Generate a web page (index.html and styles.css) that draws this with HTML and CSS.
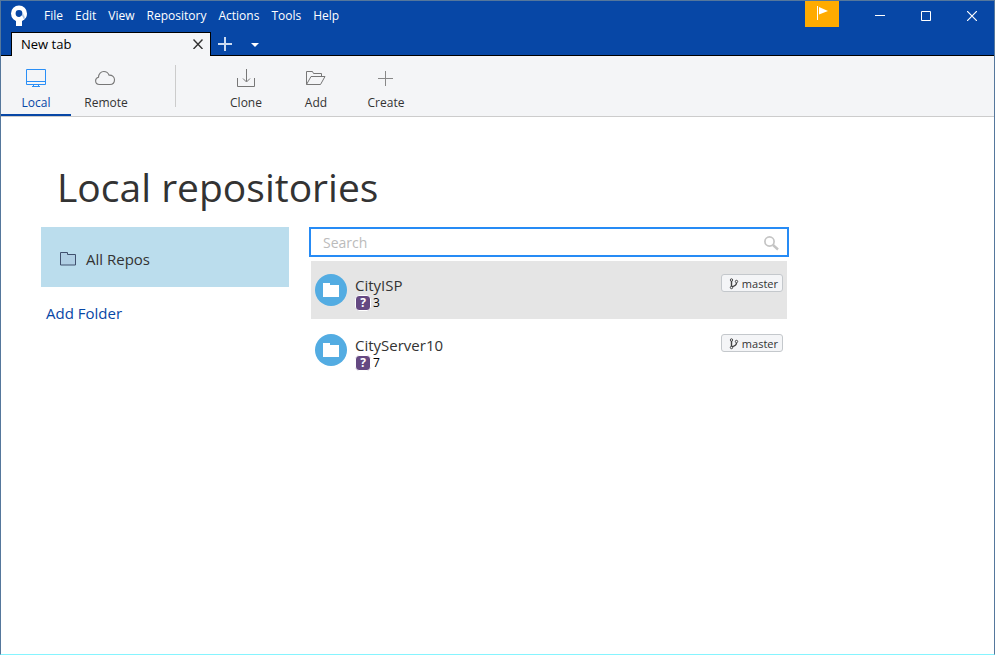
FILE: index.html
```html
<!DOCTYPE html>
<html lang="en">
<head>
<meta charset="utf-8">
<title>New tab</title>
<link rel="stylesheet" href="styles.css">
</head>
<body>
<div class="window">
  <header class="titlebar">
    <svg class="logo" width="18" height="22" viewBox="0 0 18 22">
      <defs><linearGradient id="shade" x1="0.4" y1="0.8" x2="1" y2="0.4"><stop offset="0" stop-color="#fff"/><stop offset="0.4" stop-color="#9db8dd"/><stop offset="1" stop-color="#fff"/></linearGradient></defs>
      <circle cx="9" cy="8.500" r="5.700" fill="none" stroke="#fff" stroke-width="4.600"/>
      <path d="M11 13.500Q14.700 12 14.700 8.500" fill="none" stroke="url(#shade)" stroke-width="4"/>
      <path d="M6 13h6v8H6z" fill="#fff"/>
    </svg>
    <nav class="menu">
      <button>File</button><button>Edit</button><button>View</button><button>Repository</button><button>Actions</button><button>Tools</button><button>Help</button>
    </nav>
    <button class="flag" aria-label="Notifications">
      <svg width="12" height="16" viewBox="0 0 12 16"><path d="M1 1h1v14H1zM3 2l9 4-9 3.500z" fill="#fff"/></svg>
    </button>
    <div class="controls">
      <button aria-label="Minimize"><svg width="10" height="10"><path d="M0 4.500h10" stroke="#fff"/></svg></button>
      <button aria-label="Maximize"><svg width="10" height="10"><path d="M.5.5h9v9h-9z" fill="none" stroke="#fff"/></svg></button>
      <button aria-label="Close"><svg width="10" height="10"><path d="M0 0l10 10M10 0L0 10" stroke="#fff" stroke-width="1.200"/></svg></button>
    </div>
  </header>
  <div class="tabs">
    <div class="tab"><span>New tab</span>
      <button aria-label="Close tab"><svg width="10" height="10"><path d="M.5.5l9 9.500M9.500.5l-9 9.500" stroke="#333" stroke-width="1.400"/></svg></button>
    </div>
    <button class="new-tab" aria-label="New tab"><svg width="14" height="14"><path d="M0 7h14M7 0v14" stroke="#ccdcf2" stroke-width="2"/></svg></button>
    <button class="tab-list" aria-label="List tabs"><svg width="8" height="4"><path d="M0 0h8L4 4z" fill="#fff"/></svg></button>
  </div>
  <div class="toolbar">
    <button class="tool active">
      <svg width="22" height="20" viewBox="0 0 22 20" fill="none" stroke="#2a8ff7"><path d="M1.500 1.500h19v15h-19zM1.500 13.500h19M8.500 16.500v2M13.500 16.500v2M7 18.500h8"/></svg>
      <span>Local</span>
    </button>
    <button class="tool">
      <svg width="22" height="20" viewBox="0 0 22 20" fill="none" stroke="#777" stroke-width="1.100"><path d="M4.500 16.500C2 16.500 .6 15 .6 12.800c0-1.900 1.200-3.200 2.900-3.600C3.500 5.800 6 3.500 8.800 3.500c2.600 0 4.400 1.500 5.200 3.600 3.400-.2 5.500 2 5.500 4.700 0 2.800-2 4.700-4.600 4.700z"/></svg>
      <span>Remote</span>
    </button>
    <div class="divider"></div>
    <button class="tool">
      <svg width="22" height="20" viewBox="0 0 22 20" fill="none" stroke="#777"><path d="M2.500 10v8.500h17V10M11.500 1v12.500M8 10.500l3.500 3.500 3.500-3.500"/></svg>
      <span>Clone</span>
    </button>
    <button class="tool">
      <svg width="22" height="20" viewBox="0 0 22 20" fill="none" stroke="#777"><path d="M1.500 16.500v-13h6l1 2h8v3M1.500 16.500h14l4.500-8H6l-4.500 8"/></svg>
      <span>Add</span>
    </button>
    <button class="tool">
      <svg width="22" height="20" viewBox="0 0 22 20"><path d="M3 10.500h15M10.500 3v15" stroke="#888"/></svg>
      <span>Create</span>
    </button>
  </div>
  <main class="content">
    <h1>Local repositories</h1>
    <div class="columns">
      <aside class="sidebar">
        <button class="all-repos">
          <svg width="16" height="14" viewBox="0 0 16 14"><path d="M.5.5h7v2h8v10.500H.5z" fill="#b0cfe4" stroke="#40506e"/></svg>
          All Repos
        </button>
        <a class="add-folder" href="#">Add Folder</a>
      </aside>
      <section class="repos">
        <label class="search">
          <input type="text" placeholder="Search" aria-label="Search">
          <svg width="16" height="16" viewBox="0 0 16 16" fill="none" stroke="#c4c4c4"><circle cx="6.500" cy="6.500" r="4.600" stroke-width="1.700"/><path d="M10 10l5 4.500" stroke-width="2.400"/></svg>
        </label>
        <ul class="repo-list">
          <li class="repo selected">
            <svg class="avatar" width="32" height="32" viewBox="0 0 32 32"><circle cx="16" cy="16" r="16" fill="#53ace2"/><path d="M8 9h7v2h9v12H8z" fill="#fff"/></svg>
            <div class="info"><span class="name">CityISP</span><span class="status"><b>?</b>3</span></div>
            <span class="branch"><svg width="10" height="12" viewBox="0 0 10 12" fill="none" stroke="#444"><circle cx="2.500" cy="2" r="1.200"/><circle cx="2.500" cy="9.500" r="1.200"/><circle cx="7.500" cy="3.500" r="1.200"/><path d="M2.500 3v5.500M7.500 5c0 2.500-2 3-4.500 3.800" stroke-width="1.400"/></svg>master</span>
          </li>
          <li class="repo">
            <svg class="avatar" width="32" height="32" viewBox="0 0 32 32"><circle cx="16" cy="16" r="16" fill="#53ace2"/><path d="M8 9h7v2h9v12H8z" fill="#fff"/></svg>
            <div class="info"><span class="name">CityServer10</span><span class="status"><b>?</b>7</span></div>
            <span class="branch"><svg width="10" height="12" viewBox="0 0 10 12" fill="none" stroke="#444"><circle cx="2.500" cy="2" r="1.200"/><circle cx="2.500" cy="9.500" r="1.200"/><circle cx="7.500" cy="3.500" r="1.200"/><path d="M2.500 3v5.500M7.500 5c0 2.500-2 3-4.500 3.800" stroke-width="1.400"/></svg>master</span>
          </li>
        </ul>
      </section>
    </div>
  </main>
</div>
</body>
</html>
```
FILE: styles.css
```css
* { box-sizing: border-box; }
body {
  margin: 0;
  background: #fff;
  color: #333;
  font: 12px/16px "Open Sans", "Noto Sans", sans-serif;
}
button {
  margin: 0;
  padding: 0;
  border: 0;
  background: none;
  color: inherit;
  font: inherit;
}
svg { display: block; flex: none; }

.window { min-height: 100vh; padding-top: 1px; }
.window::after {
  content: "";
  position: fixed;
  inset: 0;
  border: 1px solid #55779c;
  border-bottom-color: #86f4ff;
  pointer-events: none;
}

.titlebar {
  display: flex;
  align-items: flex-start;
  height: 31px;
  padding-left: 10px;
  background: #0747a6;
  color: #fff;
}
.logo { margin-top: 4px; }
.menu { display: flex; gap: 12px; padding: 7px 0 0 16px; }
.flag {
  display: flex;
  justify-content: center;
  width: 34px;
  height: 26px;
  margin-left: auto;
  padding-top: 4px;
  background: #ffab00;
}
.controls { display: flex; margin-left: 18px; }
.controls button {
  display: grid;
  place-items: center;
  width: 46px;
  height: 30px;
}

.tabs {
  display: flex;
  height: 24px;
  padding-left: 11px;
  background: #0747a6;
  box-shadow: inset 0 -1px #000;
}
.tab {
  display: flex;
  align-items: center;
  justify-content: space-between;
  width: 200px;
  padding: 0 7px 1px 9px;
  border: 1px solid #000;
  border-bottom: 0;
  background: #f4f5f7;
  color: #000;
  font-size: 13px;
}
.new-tab { padding: 0 7px; }
.tab-list { padding: 2px 12px 0; }

.toolbar {
  display: flex;
  height: 61px;
  padding-left: 1px;
  border-bottom: 1px solid #ccc;
  background: #f4f5f7;
}
.tool {
  display: flex;
  flex-direction: column;
  align-items: center;
  gap: 7px;
  width: 70px;
  padding-top: 12px;
}
.tool.active { box-shadow: inset 0 -2px #0747a6; color: #0747a6; }
.divider {
  width: 1px;
  height: 42px;
  margin: 9px 35px 0 34px;
  background: #ccc;
}

.content { padding: 42px 41px; }
h1 {
  margin: 0 0 12px 16px;
  font-size: 39px;
  font-weight: 400;
  line-height: 56px;
}
.columns {
  display: grid;
  grid-template-columns: 248px minmax(0, 480px);
  gap: 20px;
}
.all-repos {
  display: flex;
  align-items: center;
  gap: 10px;
  width: 100%;
  height: 60px;
  padding: 4px 19px 0;
  background: #bbdded;
  font-size: 15px;
}
.add-folder {
  display: block;
  margin: 16px 5px;
  color: #0747a6;
  font-size: 15px;
  line-height: 20px;
  text-decoration: none;
}
.search {
  display: flex;
  align-items: center;
  height: 30px;
  padding: 1px 8px 0 12px;
  border: 2px solid #268bf5;
}
.search input {
  flex: 1;
  min-width: 0;
  padding: 0;
  border: 0;
  outline: 0;
  background: none;
  color: inherit;
  font: inherit;
  font-size: 14px;
}
.search input::placeholder { color: #bbb; opacity: 1; }
.repo-list {
  display: grid;
  gap: 2px;
  margin: 4px 2px 0;
  padding: 0;
  list-style: none;
}
.repo {
  display: flex;
  align-items: flex-start;
  height: 58px;
  padding: 13px 4px;
}
.repo.selected { background: #e5e5e5; }
.info {
  display: flex;
  flex: 1;
  flex-direction: column;
  padding: 1px 0 0 8px;
}
.name { font-size: 15px; line-height: 20px; }
.status {
  display: flex;
  align-items: center;
  gap: 2px;
  color: #000;
}
.status b {
  width: 16px;
  height: 16px;
  border: 1px solid #fff;
  border-radius: 4px;
  background: #654982;
  color: #fff;
  line-height: 14px;
  text-align: center;
}
.branch {
  display: flex;
  align-items: center;
  gap: 3px;
  height: 18px;
  padding: 1px 4px 0 7px;
  border: 1px solid #c4c8cc;
  border-radius: 3px;
  background: #f4f5f7;
  font-size: 11px;
}
```
